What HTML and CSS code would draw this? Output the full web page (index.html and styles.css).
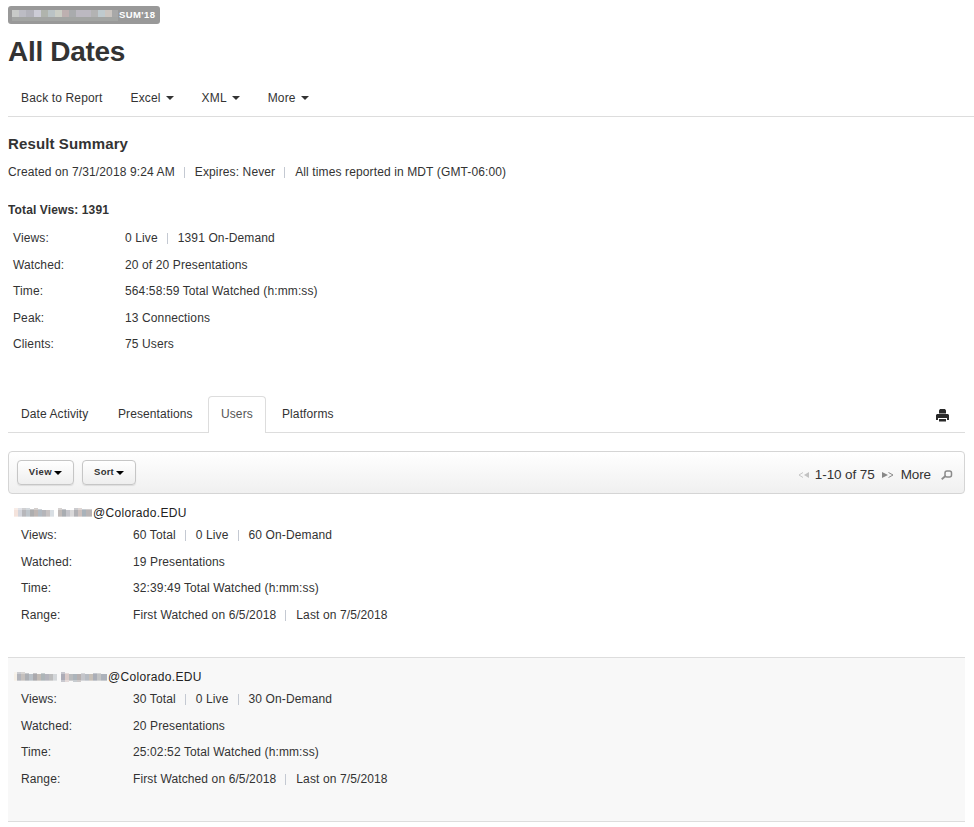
FILE: index.html
```html
<!DOCTYPE html>
<html lang="en">
<head>
<meta charset="utf-8">
<title>All Dates</title>
<link rel="stylesheet" href="styles.css">
</head>
<body>
<header>
  <div class="badge">
    <svg class="mosaic" width="108" height="14" viewBox="0 0 108 14" shape-rendering="crispEdges">
      <path fill="#b3b3b3" d="M1 2h106v7h-106z"/><path fill="#c8cac8" d="M1 2h7v7h-7z"/><path fill="#bcbcc4" d="M8 2h7v7h-7z"/><path fill="#b2b2ba" d="M15 2h8v7h-8z"/><path fill="#ccccd6" d="M23 2h7v7h-7z"/><path fill="#b0b4ad" d="M30 2h7v7h-7z"/><path fill="#bac3c5" d="M37 2h7v7h-7z"/><path fill="#cbcec5" d="M44 2h7v7h-7z"/><path fill="#bdb0b0" d="M51 2h7v7h-7z"/><path fill="#a9abad" d="M58 2h7v7h-7z"/><path fill="#bcb9c1" d="M65 2h15v7h-15z"/><path fill="#bfcace" d="M87 2h7v7h-7z"/><path fill="#cbc5c0" d="M94 2h7v7h-7z"/><path fill="#a3a5a3" d="M1 9h106v4h-106z"/><path fill="#a8a8a8" d="M101 2h6v7h-6z"/>
    </svg>
    <span>SUM'18</span>
  </div>
  <h1>All Dates</h1>
  <nav class="menu">
    <a>Back to Report</a><a>Excel<i class="caret"></i></a><a>XML<i class="caret"></i></a><a>More<i class="caret"></i></a>
  </nav>
</header>
<section class="summary">
  <h2>Result Summary</h2>
  <p class="created">Created on 7/31/2018 9:24 AM<b></b>Expires: Never<b></b>All times reported in MDT (GMT-06:00)</p>
  <h3>Total Views: 1391</h3>
  <dl>
    <dt>Views:</dt><dd>0 Live<b></b>1391 On-Demand</dd>
    <dt>Watched:</dt><dd>20 of 20 Presentations</dd>
    <dt>Time:</dt><dd>564:58:59 Total Watched (h:mm:ss)</dd>
    <dt>Peak:</dt><dd>13 Connections</dd>
    <dt>Clients:</dt><dd>75 Users</dd>
  </dl>
</section>
<nav class="tabs">
  <a>Date Activity</a><a>Presentations</a><a class="active">Users</a><a>Platforms</a>
  <svg class="print" width="13" height="13" viewBox="0 0 13 13"><path fill="#292929" d="M4 0h5l1 1.500V4.500H3v-3zM1 5h11l1 1v5h-2V9H2v2H0V6zM3 10h7v2.500H3z"/></svg>
</nav>
<div class="toolbar">
  <button class="view">View<i class="caret"></i></button><button class="sort">Sort<i class="caret"></i></button>
  <div class="pager">
    <svg width="11" height="6" viewBox="0 0 11 6"><path fill="none" stroke="#c6c6c6" d="M5 .5 1 3l4 2.500"/><path fill="#c2c2c2" d="M11 0v6L6 3z"/></svg>
    <span class="range">1-10 of 75</span>
    <svg width="12" height="6" viewBox="0 0 12 6"><path fill="#888" d="M0 0v6l6-3z"/><path fill="none" stroke="#8a8a8a" d="m6.500 .5 4.500 2.500-4.500 2.500"/></svg>
    <span class="more">More</span>
    <svg class="search" width="12" height="10" viewBox="0 0 12 10"><rect x="4" y="1" width="6.500" height="6" rx="2" fill="none" stroke="#8b8b8b" stroke-width="1.500"/><path stroke="#8b8b8b" stroke-width="1.800" d="M4.500 6 .7 9.300"/></svg>
  </div>
</div>
<article class="user">
  <h4><svg class="mosaic" width="79" height="14" viewBox="0 0 79 14">
    <path fill="#f4e3dc" d="M0 2h4v9H0z"/><path fill="#d3d5dc" d="M4 2h4v9H4z"/><path fill="#b7b7bb" d="M8 2h4v9H8z"/><path fill="#bec5cb" d="M12 2h4v9h-4z"/><path fill="#adadae" d="M16 3h4v8h-4z"/><path fill="#bdb5b2" d="M20 2h4v9h-4z"/><path fill="#b2bac2" d="M24 3h4v8h-4z"/><path fill="#b5b5b9" d="M28 4h4v7h-4z"/><path fill="#c7c2c2" d="M32 4h4v7h-4z"/><path fill="#d9dfe4" d="M36 4h4v7h-4z"/><path fill="#c1bbb9" d="M44 2h4v9h-4z"/><path fill="#a9adb2" d="M48 3h4v8h-4z"/><path fill="#c4c4ca" d="M52 4h4v7h-4z"/><path fill="#d9d8d9" d="M56 4h4v7h-4z"/><path fill="#b1b1b5" d="M60 2h4v9h-4z"/><path fill="#ccc0bd" d="M64 2h4v9h-4z"/><path fill="#a9b2ba" d="M68 3h4v8h-4z"/><path fill="#b9b4b4" d="M72 3h6v8h-6z"/><path fill="#fff" fill-opacity=".35" d="M0 2h79v2H0zM0 10h79v2H0z"/>
  </svg>@Colorado.EDU</h4>
  <dl>
    <dt>Views:</dt><dd>60 Total<b></b>0 Live<b></b>60 On-Demand</dd>
    <dt>Watched:</dt><dd>19 Presentations</dd>
    <dt>Time:</dt><dd>32:39:49 Total Watched (h:mm:ss)</dd>
    <dt>Range:</dt><dd>First Watched on 6/5/2018<b></b>Last on 7/5/2018</dd>
  </dl>
</article>
<article class="user alt">
  <h4><svg class="mosaic" width="94" height="14" viewBox="0 0 94 14">
    <path fill="#f6f0e7" d="M0 2h3v9H0z"/><path fill="#b2b4bb" d="M3 2h4v9H3z"/><path fill="#c5c0bd" d="M7 2h4v9H7z"/><path fill="#acafb4" d="M11 3h4v8h-4z"/><path fill="#b9c0c7" d="M15 4h4v7h-4z"/><path fill="#aaa9ad" d="M19 3h4v8h-4z"/><path fill="#c2bbb6" d="M23 4h4v7h-4z"/><path fill="#adb5b8" d="M27 3h4v8h-4z"/><path fill="#b5b5bd" d="M31 4h4v7h-4z"/><path fill="#bdbdbe" d="M35 4h4v7h-4z"/><path fill="#d4d7da" d="M39 4h4v7h-4z"/><path fill="#acacb7" d="M47 2h4v10h-4z"/><path fill="#dacbc9" d="M51 3h4v9h-4z"/><path fill="#b9bbbd" d="M55 4h4v7h-4z"/><path fill="#acb4bb" d="M59 4h4v8h-4z"/><path fill="#b6b0b0" d="M63 4h4v8h-4z"/><path fill="#c4c5ca" d="M67 3h4v8h-4z"/><path fill="#b7bcc3" d="M71 4h4v7h-4z"/><path fill="#c6bfb7" d="M75 4h4v7h-4z"/><path fill="#aaaeb7" d="M79 3h4v8h-4z"/><path fill="#c2c3c4" d="M83 3h4v8h-4z"/><path fill="#acb2bb" d="M87 4h6v7h-6z"/><path fill="#f8f8f8" fill-opacity=".35" d="M0 2h94v2H0zM0 10h94v2H0z"/>
  </svg>@Colorado.EDU</h4>
  <dl>
    <dt>Views:</dt><dd>30 Total<b></b>0 Live<b></b>30 On-Demand</dd>
    <dt>Watched:</dt><dd>20 Presentations</dd>
    <dt>Time:</dt><dd>25:02:52 Total Watched (h:mm:ss)</dd>
    <dt>Range:</dt><dd>First Watched on 6/5/2018<b></b>Last on 7/5/2018</dd>
  </dl>
</article>
</body>
</html>
```
FILE: styles.css
```css
* { box-sizing: border-box; }
body { margin: 0 0 0 8px; height: 827px; overflow: hidden; background: #fff; color: #333; font: 12px/18px "Liberation Sans", Arial, sans-serif; letter-spacing: .12px; }
h1, h2, h3, h4, p, dl, dd { margin: 0; }
header { height: 117px; padding-top: 6px; border-bottom: 1px solid #ddd; }
.badge { display: flex; align-items: center; width: 152px; height: 18px; padding-left: 3px; border-radius: 3px; background: #999; color: #fff; font: bold 9.500px/18px "Liberation Sans", Arial, sans-serif; letter-spacing: .4px; }
h1 { height: 56px; font-size: 28px; line-height: 56px; letter-spacing: -.3px; }
.menu { display: flex; gap: 28px; padding: 9px 0 0 13px; letter-spacing: .15px; }
.caret { display: inline-block; margin-left: 5px; vertical-align: 2px; border: 4px solid transparent; border-top-color: #333; border-bottom: 0; }
.summary { height: 279px; padding-top: 17px; }
h2 { font-size: 15px; line-height: 20px; letter-spacing: .12px; }
.created { margin-top: 9px; }
b { display: inline-block; width: 1px; height: 11px; margin: 0 10px 0 9px; vertical-align: -2px; background: #c4c9d2; }
h3 { margin-top: 20px; font-size: 12px; line-height: 18px; letter-spacing: .12px; }
dl { display: grid; grid-template-columns: 112px 1fr; grid-auto-rows: 26.500px; line-height: 26px; margin: 6px 0 0 5px; }
.tabs { display: flex; width: 957px; height: 37px; border-bottom: 1px solid #ddd; line-height: 35px; }
.tabs a { padding: 0 13px; margin-right: 3px; border-top: 1px solid transparent; letter-spacing: .1px; }
.tabs a:nth-child(2) { width: 100px; padding: 0 0 0 11px; margin-right: 1px; }
.tabs a:first-child { width: 96px; }
.tabs .active { width: 58px; height: 37px; padding: 0 12px; border: 1px solid #ddd; border-bottom: 0; border-radius: 4px 4px 0 0; background: #fff; color: #555; }
.print { margin: 13px 16px 0 auto; }
.toolbar { display: flex; align-items: flex-start; gap: 8px; width: 957px; height: 43px; margin-top: 18px; padding: 8px; border: 1px solid #d5d5d5; border-radius: 4px; background: linear-gradient(#fff, #f0f0f0); }
button { display: flex; align-items: center; justify-content: center; height: 25px; padding: 0 0 2px; border: 1px solid #c6c6c6; border-radius: 4px; background: linear-gradient(#fff, #eee); box-shadow: 0 1px 1px #ddd; color: #333; font: bold 9.500px/20px "Liberation Sans", Arial, sans-serif; letter-spacing: .5px; white-space: nowrap; }
.view { width: 57px; }
.sort { width: 54px; letter-spacing: .2px; }
button .caret { margin: 3px 0 0 2px; border-top-color: #000; }
.pager { display: flex; align-items: center; margin-left: auto; height: 29px; padding-right: 3px; font-size: 13.500px; letter-spacing: -.1px; }
.range { margin: 0 7px 0 6px; }
.more { margin: 0 10px 0 7px; }
.user { width: 957px; height: 164px; padding-top: 10px; border-bottom: 1px solid #ddd; }
.user dl { margin: 0 0 0 13px; }
.alt { background: #f8f8f8; }
h4 { display: flex; align-items: center; height: 18px; padding-left: 6px; color: #222; font-size: 12px; font-weight: normal; letter-spacing: .32px; }
```
